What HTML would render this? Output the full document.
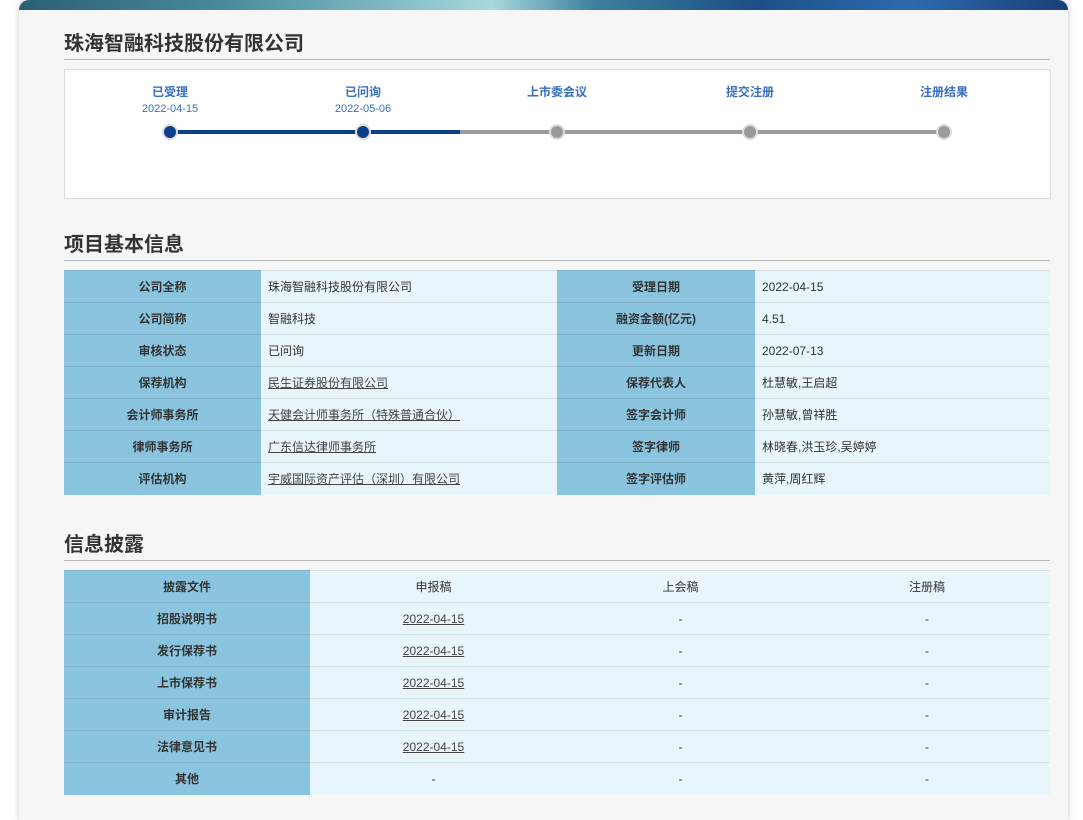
<!DOCTYPE html>
<html><head><meta charset="utf-8">
<style>
*{margin:0;padding:0;box-sizing:border-box}
body{width:1083px;height:805px;overflow:hidden;background:#fff;font-family:"Liberation Sans","Noto Sans CJK SC",sans-serif;color:#333;position:relative}
.card{position:absolute;left:19px;top:0;width:1049px;height:820px;background:#f6f6f6;border-radius:10px 10px 0 0;box-shadow:0 0 6px rgba(0,0,0,.25);overflow:hidden}
.banner{position:absolute;left:0;top:0;width:100%;height:10px;background:linear-gradient(90deg,#2b5f74,#4a8c9c 20%,#7fb9c4 35%,#a9d9de 45%,#3c7f9b 55%,#1c4f86 70%,#2d6ab0 85%,#1b3f78)}
.abs{position:absolute}
h1{position:absolute;left:45px;top:27px;font-size:20px;font-weight:bold;color:#333}
.rule{position:absolute;left:45px;width:986px;height:1px;background:#b5b5b5}
.tl{position:absolute;left:45px;top:69px;width:987px;height:130px;background:#fff;border:1px solid #ddd}
.step{position:absolute;width:120px;text-align:center;color:#3a6fbf;font-size:12px;font-weight:bold}
.step .d{font-weight:normal;font-size:11px;margin-top:3px}
.dot{position:absolute;width:16px;height:16px;border-radius:50%;background:#ddd}
.dot i{position:absolute;left:2px;top:2px;width:12px;height:12px;border-radius:50%;background:#9a9a9a}
.dot.on i{background:#0d3e8a}
h2{position:absolute;left:45px;font-size:20px;font-weight:bold;color:#333}
table{position:absolute;left:45px;width:986px;border-collapse:collapse;font-size:12px}
td{height:32px;border-top:1px solid #d6e2e8;padding:0 7px}
td.l{background:#8ac4de;text-align:center;font-weight:bold;color:#333;border-top:1px solid #7cb3cb}
td.v{background:#e8f5fb;color:#333}
td.c{text-align:center}
u{text-decoration:underline;color:#444}
</style></head><body>
<div class="card">
<div class="banner"></div>
<h1>珠海智融科技股份有限公司</h1>
<div class="rule" style="top:59px"></div>
<div class="tl"></div>
<div class="step" style="left:91px;top:83px">已受理<div class="d">2022-04-15</div></div>
<div class="step" style="left:284px;top:83px">已问询<div class="d">2022-05-06</div></div>
<div class="step" style="left:478px;top:83px">上市委会议</div>
<div class="step" style="left:671px;top:83px">提交注册</div>
<div class="step" style="left:865px;top:83px">注册结果</div>
<div class="abs" style="left:151px;top:130px;width:290px;height:4px;background:#0d3e8a"></div>
<div class="abs" style="left:441px;top:130px;width:484px;height:4px;background:#9a9a9a"></div>
<div class="dot on" style="left:143px;top:124px"><i></i></div>
<div class="dot on" style="left:336px;top:124px"><i></i></div>
<div class="dot" style="left:530px;top:124px"><i></i></div>
<div class="dot" style="left:723px;top:124px"><i></i></div>
<div class="dot" style="left:917px;top:124px"><i></i></div>

<h2 style="top:228px">项目基本信息</h2>
<div class="rule" style="top:260px"></div>
<table style="top:270px">
<colgroup><col style="width:197px"><col style="width:296px"><col style="width:198px"><col style="width:295px"></colgroup>
<tr><td class="l">公司全称</td><td class="v">珠海智融科技股份有限公司</td><td class="l">受理日期</td><td class="v">2022-04-15</td></tr>
<tr><td class="l">公司简称</td><td class="v">智融科技</td><td class="l">融资金额(亿元)</td><td class="v">4.51</td></tr>
<tr><td class="l">审核状态</td><td class="v">已问询</td><td class="l">更新日期</td><td class="v">2022-07-13</td></tr>
<tr><td class="l">保荐机构</td><td class="v"><u>民生证券股份有限公司</u></td><td class="l">保荐代表人</td><td class="v">杜慧敏,王启超</td></tr>
<tr><td class="l">会计师事务所</td><td class="v"><u>天健会计师事务所（特殊普通合伙）</u></td><td class="l">签字会计师</td><td class="v">孙慧敏,曾祥胜</td></tr>
<tr><td class="l">律师事务所</td><td class="v"><u>广东信达律师事务所</u></td><td class="l">签字律师</td><td class="v">林晓春,洪玉珍,吴婷婷</td></tr>
<tr><td class="l">评估机构</td><td class="v"><u>宇威国际资产评估（深圳）有限公司</u></td><td class="l">签字评估师</td><td class="v">黄萍,周红辉</td></tr>
</table>

<h2 style="top:528px">信息披露</h2>
<div class="rule" style="top:560px"></div>
<table style="top:570px">
<colgroup><col style="width:246px"><col style="width:247px"><col style="width:247px"><col style="width:246px"></colgroup>
<tr><td class="l">披露文件</td><td class="v c">申报稿</td><td class="v c">上会稿</td><td class="v c">注册稿</td></tr>
<tr><td class="l">招股说明书</td><td class="v c"><u>2022-04-15</u></td><td class="v c">-</td><td class="v c">-</td></tr>
<tr><td class="l">发行保荐书</td><td class="v c"><u>2022-04-15</u></td><td class="v c">-</td><td class="v c">-</td></tr>
<tr><td class="l">上市保荐书</td><td class="v c"><u>2022-04-15</u></td><td class="v c">-</td><td class="v c">-</td></tr>
<tr><td class="l">审计报告</td><td class="v c"><u>2022-04-15</u></td><td class="v c">-</td><td class="v c">-</td></tr>
<tr><td class="l">法律意见书</td><td class="v c"><u>2022-04-15</u></td><td class="v c">-</td><td class="v c">-</td></tr>
<tr><td class="l">其他</td><td class="v c">-</td><td class="v c">-</td><td class="v c">-</td></tr>
</table>
</div>
</body></html>
